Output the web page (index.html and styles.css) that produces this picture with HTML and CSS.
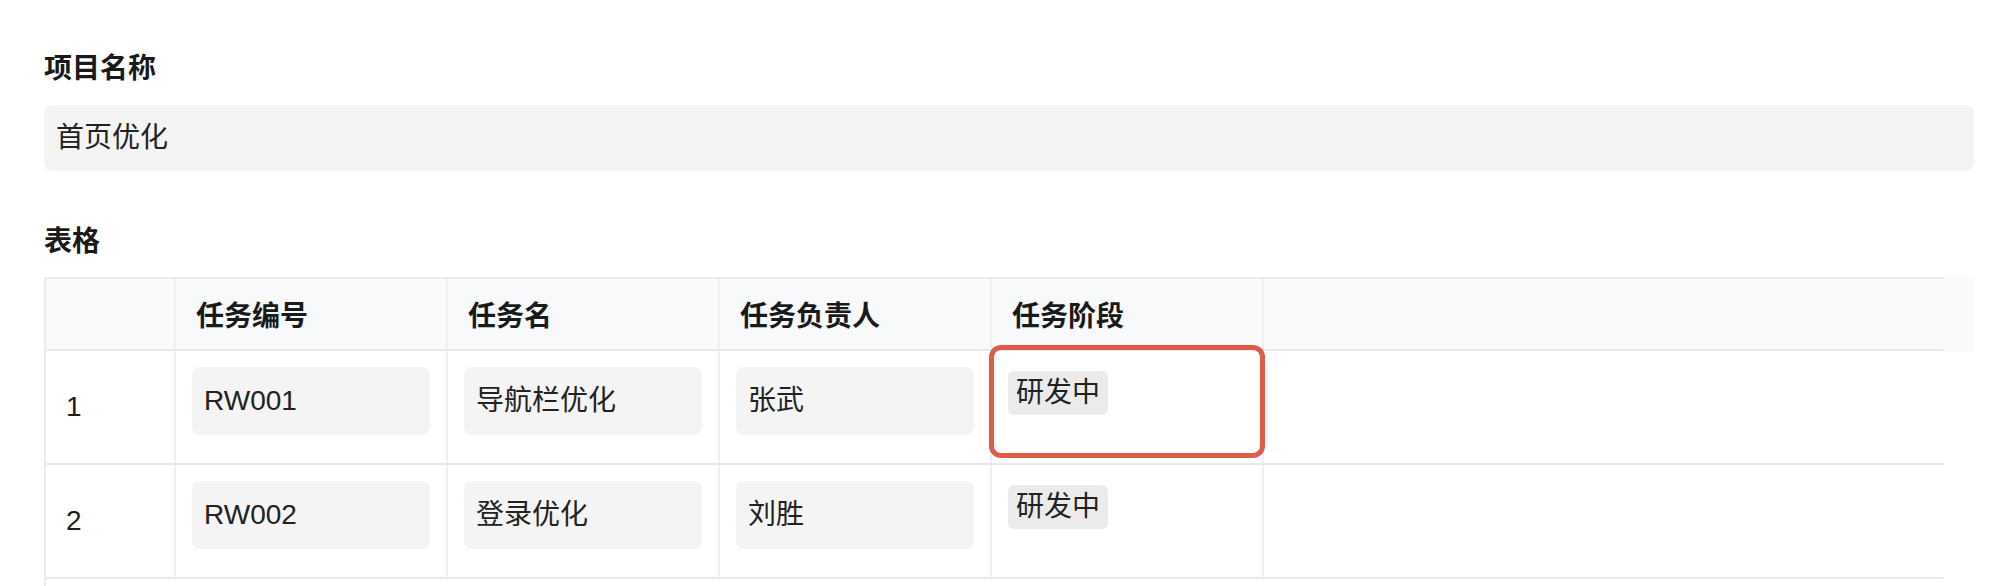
FILE: index.html
```html
<!DOCTYPE html>
<html lang="zh-CN">
<head>
<meta charset="utf-8">
<title>项目</title>
<link rel="stylesheet" href="styles.css">
</head>
<body>
<div class="page">
  <div class="field">
    <div class="label">项目名称</div>
    <div class="input title-input">首页优化</div>
  </div>
  <div class="field table-field">
    <div class="label">表格</div>
    <div class="table-wrap">
      <div class="table">
        <div class="row head">
          <div class="cell idx"></div>
          <div class="cell">任务编号</div>
          <div class="cell">任务名</div>
          <div class="cell">任务负责人</div>
          <div class="cell">任务阶段</div>
          <div class="cell last"></div>
        </div>
        <div class="row body">
          <div class="cell idx">1</div>
          <div class="cell"><div class="input cell-input">RW001</div></div>
          <div class="cell"><div class="input cell-input">导航栏优化</div></div>
          <div class="cell"><div class="input cell-input">张武</div></div>
          <div class="cell stage"><span class="tag">研发中</span><div class="highlight"></div></div>
          <div class="cell last"></div>
        </div>
        <div class="row body">
          <div class="cell idx">2</div>
          <div class="cell"><div class="input cell-input">RW002</div></div>
          <div class="cell"><div class="input cell-input">登录优化</div></div>
          <div class="cell"><div class="input cell-input">刘胜</div></div>
          <div class="cell stage"><span class="tag">研发中</span></div>
          <div class="cell last"></div>
        </div>
        <div class="table-foot"></div>
      </div>
      <div class="head-filler"></div>
    </div>
  </div>
</div>
</body>
</html>
```

FILE: styles.css
```css
* { box-sizing: border-box; }

html, body {
  margin: 0;
  padding: 0;
  background: #ffffff;
}

body {
  font-family: "Liberation Sans", "Noto Sans CJK SC", sans-serif;
  font-size: 28px;
  color: #1f1f1f;
}

.page {
  padding: 49px 36px 0 44px;
}

.label {
  font-weight: 700;
  line-height: 40px;
  height: 40px;
  color: #1a1a1a;
  margin-bottom: 16px;
}

.input {
  background: #f3f4f3;
  border-radius: 8px;
  padding: 0 12px;
  color: #222222;
  white-space: nowrap;
}

.title-input {
  height: 66px;
  line-height: 66px;
}

.table-field {
  margin-top: 51px;
}

.table-field .label {
  margin-bottom: 15px;
}

.table-wrap {
  display: flex;
  align-items: flex-start;
}

.table {
  width: 1900px;
  flex: none;
  border-top: 2px solid #ececee;
  border-left: 2px solid #ebecf0;
}

.head-filler {
  width: 30px;
  height: 74px;
  background: #fafafa;
}

.row {
  display: grid;
  grid-template-columns: 130px 272px 272px 272px 272px 1fr;
  border-bottom: 2px solid #e8e9ee;
}

.cell {
  border-right: 2px solid #eef0f3;
  min-width: 0;
}

.cell.last {
  border-right: none;
}

.head {
  background: #f8f9fb;
  height: 72px;
}

.head .cell {
  display: flex;
  align-items: center;
  padding: 0 20px;
  font-weight: 700;
  color: #1a1a1a;
}

.body {
  height: 114px;
}

.body .cell {
  padding: 16px;
}

.body .cell.idx {
  display: flex;
  align-items: center;
  padding: 0 20px;
}

.cell-input {
  height: 68px;
  line-height: 68px;
}

.stage {
  position: relative;
}

.tag {
  display: inline-block;
  margin-top: 4px;
  height: 44px;
  line-height: 44px;
  padding: 0 8px;
  background: #ebebeb;
  border-radius: 6px;
  color: #222222;
}

.highlight {
  position: absolute;
  left: -3px;
  top: -6px;
  right: -3px;
  bottom: 5px;
  border: 5px solid #e05b4c;
  border-radius: 12px;
  pointer-events: none;
}

.table-foot {
  height: 60px;
}
```
